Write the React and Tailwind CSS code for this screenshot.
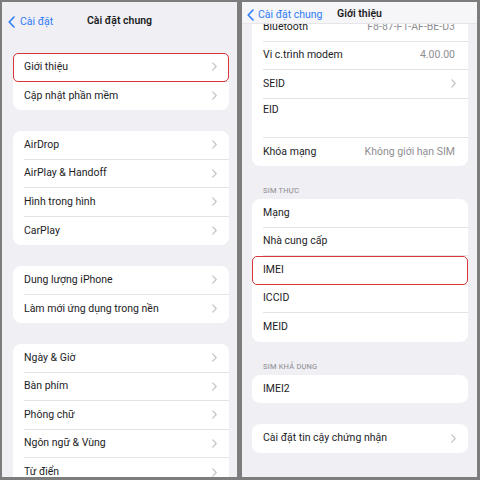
import React from 'react';

const Chevron = () => (
  <svg width="5" height="9" viewBox="0 0 5 9" className="shrink-0">
    <path d="M0.8 0.8 L4.2 4.5 L0.8 8.2" fill="none" stroke="#c4c4c8" strokeWidth="1.2" strokeLinecap="round" strokeLinejoin="round" />
  </svg>
);

const BackChevron = () => (
  <svg width="7" height="12" viewBox="0 0 7 12" className="shrink-0">
    <path d="M6 1 L1.2 6 L6 11" fill="none" stroke="#2f7bf5" strokeWidth="1.6" strokeLinecap="round" strokeLinejoin="round" />
  </svg>
);

const Row = ({ label, value, chevron, last, highlight, tall }) => (
  <div className={`relative flex ${tall ? 'h-[39px] items-start pt-[4px]' : 'h-[28.5px] items-center'} pl-[11px]`}>
    <div className={`flex flex-1 h-full ${tall ? 'items-start' : 'items-center'} pr-[12px] ${last ? '' : 'border-b border-[#e3e3e7]'}`}>
      <span className={`flex-1 text-[10.5px] text-[#1d1d1f] truncate ${tall ? 'leading-[14px]' : ''}`}>{label}</span>
      {value && <span className="text-[10.5px] text-[#8e8e93] mr-[1px]">{value}</span>}
      {chevron && <Chevron />}
    </div>
    {highlight && (
      <div className="absolute inset-0 border-[1.5px] border-[#d8353d] rounded-[5px]" />
    )}
  </div>
);

const Card = ({ rows, className = '' }) => (
  <div className={`bg-white rounded-[8px] ${className}`}>
    {rows.map((r, i) => (
      <Row key={i} {...r} last={i === rows.length - 1} />
    ))}
  </div>
);

const Header = ({ children }) => (
  <div className="pl-[11px] pt-[20px] pb-[4px] text-[7.5px] text-[#8a8a8e] uppercase tracking-[0.2px] leading-[9px]">
    {children}
  </div>
);

export default function App() {
  const font = { fontFamily: 'Roboto, "Noto Sans", sans-serif' };
  return (
    <div className="w-[480px] h-[480px] bg-[#7d7d7d] pt-[2px] pl-[2px] pr-[3px] pb-[3px] flex gap-[5px] overflow-hidden" style={font}>
      {/* Left: Cài đặt chung */}
      <div className="flex-1 bg-[#efeff4] overflow-hidden flex flex-col">
        <div className="h-[36px] relative flex items-center justify-center shrink-0">
          <div className="absolute left-[6px] top-[12px] flex items-center gap-[5px]">
            <BackChevron />
            <span className="text-[10.5px] text-[#2f7bf5]">Cài đặt</span>
          </div>
          <span className="text-[10.5px] font-semibold text-[#1d1d1f] mt-[2px]">Cài đặt chung</span>
        </div>
        <div className="ml-[11px] mr-[8px] mt-[15px] flex flex-col gap-[21px]">
          <Card rows={[
            { label: 'Giới thiệu', chevron: true, highlight: true },
            { label: 'Cập nhật phần mềm', chevron: true },
          ]} />
          <Card rows={[
            { label: 'AirDrop', chevron: true },
            { label: 'AirPlay & Handoff', chevron: true },
            { label: 'Hình trong hình', chevron: true },
            { label: 'CarPlay', chevron: true },
          ]} />
          <Card rows={[
            { label: 'Dung lượng iPhone', chevron: true },
            { label: 'Làm mới ứng dụng trong nền', chevron: true },
          ]} />
          <Card rows={[
            { label: 'Ngày & Giờ', chevron: true },
            { label: 'Bàn phím', chevron: true },
            { label: 'Phông chữ', chevron: true },
            { label: 'Ngôn ngữ & Vùng', chevron: true },
            { label: 'Từ điển', chevron: true },
          ]} />
        </div>
      </div>

      {/* Right: Giới thiệu */}
      <div className="flex-1 bg-[#efeff4] overflow-hidden relative">
        <div className="absolute top-0 left-0 right-0 h-[22px] bg-[#f6f6f8]/95 border-b border-[#e6e6ea] z-10">
          <div className="absolute left-[5px] top-[5px] flex items-center gap-[4px]">
            <BackChevron />
            <span className="text-[10.5px] text-[#2f7bf5]">Cài đặt chung</span>
          </div>
          <span className="absolute left-[95px] top-[4px] text-[10.5px] font-semibold text-[#1d1d1f]">Giới thiệu</span>
        </div>
        <div className="ml-[10px] mr-[9px] mt-[11px]">
          <Card rows={[
            { label: 'Bluetooth', value: 'F8-87-F1-AF-BE-D3' },
            { label: 'Vi c.trình modem', value: '4.00.00' },
            { label: 'SEID', chevron: true },
            { label: 'EID', tall: true },
            { label: 'Khóa mạng', value: 'Không giới hạn SIM' },
          ]} />
          <Header>SIM thực</Header>
          <Card rows={[
            { label: 'Mạng' },
            { label: 'Nhà cung cấp' },
            { label: 'IMEI', highlight: true },
            { label: 'ICCID' },
            { label: 'MEID' },
          ]} />
          <Header>SIM khả dụng</Header>
          <Card rows={[{ label: 'IMEI2' }]} />
          <Card className="mt-[21px]" rows={[{ label: 'Cài đặt tin cậy chứng nhận', chevron: true }]} />
        </div>
      </div>
    </div>
  );
}
